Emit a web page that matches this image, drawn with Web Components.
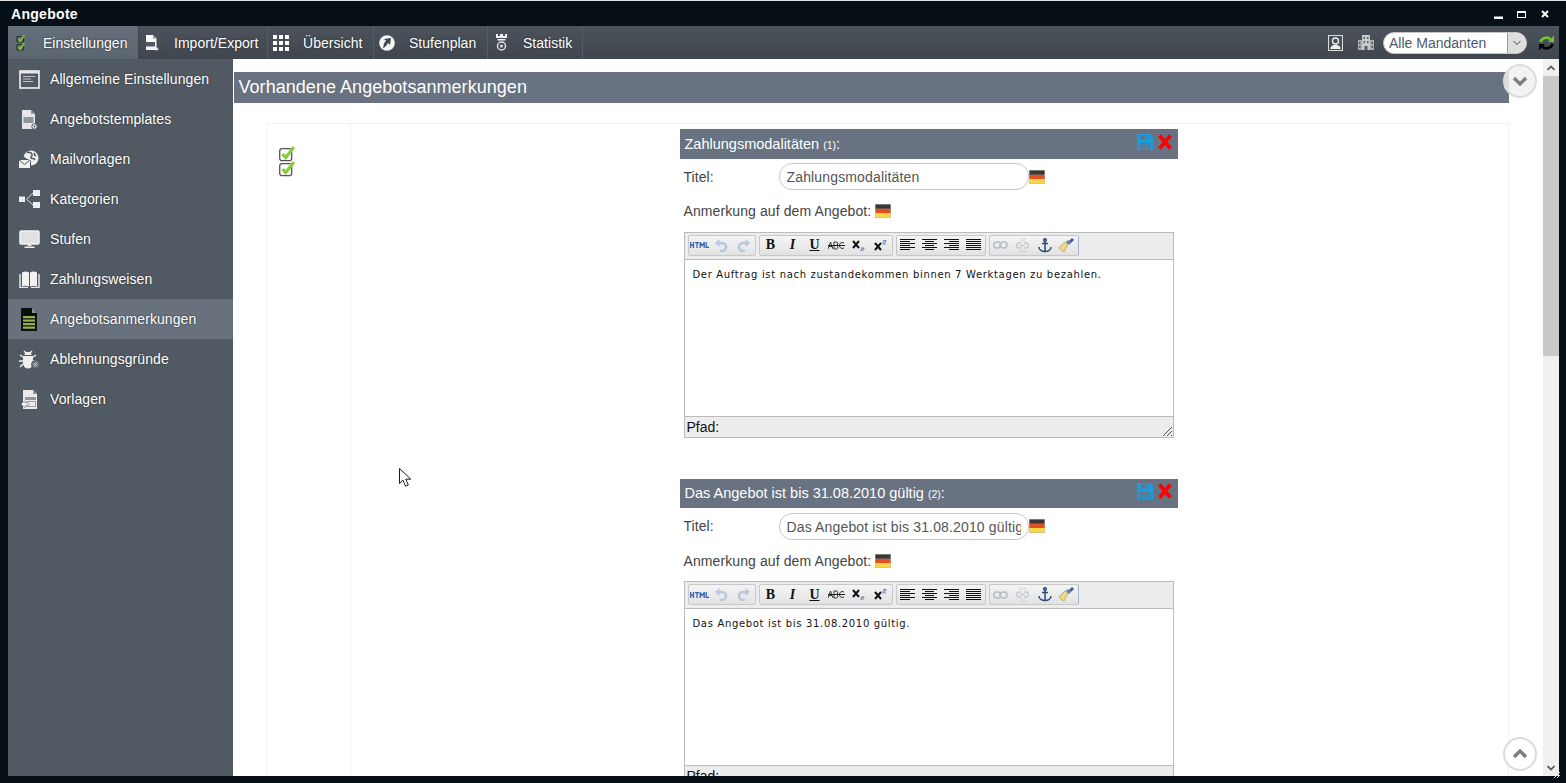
<!DOCTYPE html>
<html lang="de">
<head>
<meta charset="utf-8">
<title>Angebote</title>
<style>
	html, body { margin: 0; height: 100%; overflow: hidden; background: #060e16; }
	body { font: 14px "Liberation Sans", Arial, sans-serif; }
</style>
</head>
<body>
<app-window>
	<app-titlebar slot="title">Angebote</app-titlebar>
	<app-toolbar slot="toolbar">
		<app-tab icon="checks" w="131" active>Einstellungen</app-tab>
		<app-tab icon="pagegear" w="129">Import/Export</app-tab>
		<app-tab icon="grid" w="106">Übersicht</app-tab>
		<app-tab icon="compass" w="114">Stufenplan</app-tab>
		<app-tab icon="stats" w="95">Statistik</app-tab>
		<toolbar-right slot="right"></toolbar-right>
	</app-toolbar>
	<side-nav slot="nav">
		<side-item icon="window">Allgemeine Einstellungen</side-item>
		<side-item icon="template">Angebotstemplates</side-item>
		<side-item icon="mail">Mailvorlagen</side-item>
		<side-item icon="tree">Kategorien</side-item>
		<side-item icon="monitor">Stufen</side-item>
		<side-item icon="book">Zahlungsweisen</side-item>
		<side-item icon="note" active>Angebotsanmerkungen</side-item>
		<side-item icon="bug">Ablehnungsgründe</side-item>
		<side-item icon="vorlage">Vorlagen</side-item>
	</side-nav>
	<content-pane slot="main">
		<section-head>Vorhandene Angebotsanmerkungen</section-head>
		<notes-table>
			<note-editor heading="Zahlungsmodalitäten" num="1" value="Zahlungsmodalitäten">Der Auftrag ist nach zustandekommen binnen 7 Werktagen zu bezahlen.</note-editor>
			<note-editor heading="Das Angebot ist bis 31.08.2010 gültig" num="2" value="Das Angebot ist bis 31.08.2010 gültig">Das Angebot ist bis 31.08.2010 gültig.</note-editor>
		</notes-table>
	</content-pane>
</app-window>

<script>
const ICONS = {
	checks: `<svg width="10" height="17" viewBox="0 0 10 17"><rect x="1" y="2.500" width="6.500" height="5.500" rx="1" fill="none" stroke="#27322a" stroke-width="1.200"/><rect x="1" y="10.500" width="6.500" height="5.500" rx="1" fill="none" stroke="#27322a" stroke-width="1.200"/><path d="M2.200 5l2 2L8.500 1M2.200 13l2 2L8.500 9" fill="none" stroke="#7fbe34" stroke-width="2"/></svg>`,
	pagegear: `<svg width="13" height="16" viewBox="0 0 13 16"><path d="M0 0h7l3.500 3.500V15H0z" fill="#f6f6f6"/><path d="M7 0v3.500h3.500z" fill="#8d949b"/><rect x="0" y="7" width="9" height="4.500" fill="#4f5760"/><path d="M11 12.500v3M9.500 14h3" stroke="#f6f6f6" stroke-width="1.200"/></svg>`,
	grid: `<svg width="16" height="16" viewBox="0 0 16 16" fill="#fff"><rect width="4" height="4"/><rect x="6" width="4" height="4"/><rect x="12" width="4" height="4"/><rect y="6" width="4" height="4"/><rect x="6" y="6" width="4" height="4"/><rect x="12" y="6" width="4" height="4"/><rect y="12" width="4" height="4"/><rect x="6" y="12" width="4" height="4"/><rect x="12" y="12" width="4" height="4"/></svg>`,
	compass: `<svg width="16" height="16" viewBox="0 0 16 16"><circle cx="8" cy="8" r="7.800" fill="#f4f4f4"/><path d="M4 13.500l1-5 2-3-2-1.500 7-1-1 7-2-2-2 3z" fill="#3f464f"/></svg>`,
	stats: `<svg width="13" height="17" viewBox="0 0 13 17"><path d="M1 0h2v2h2V0h3v2h2V0h2v4H1z" fill="#eee"/><rect x="2.500" y="5" width="8" height="1.500" fill="#eee"/><circle cx="6.500" cy="12" r="4" fill="none" stroke="#ddd" stroke-width="1.500"/><circle cx="6.500" cy="12" r="1.500" fill="#ddd"/></svg>`,
	contact: `<svg width="15" height="16" viewBox="0 0 15 16"><rect x=".5" y=".5" width="14" height="15" fill="#4a515a" stroke="#ddd"/><circle cx="7.500" cy="6" r="3" fill="none" stroke="#eee" stroke-width="1.300"/><path d="M2.500 14c0-3 2-4 5-4s5 1 5 4z" fill="#eee"/></svg>`,
	office: `<svg width="16" height="15" viewBox="0 0 16 15"><path d="M4 0h8v15H4z" fill="#c9c9c9"/><path d="M0 5h4v10H0zM12 5h4v10h-4z" fill="#aaa"/><path d="M5.500 2h1.500v2H5.500zM9 2h1.500v2H9zM5.500 6h1.500v2H5.500zM9 6h1.500v2H9zM1 7h1.500v2H1zM13.500 7H15v2h-1.500zM1 11h1.500v2H1zM13.500 11H15v2h-1.500z" fill="#59616a"/><path d="M6.500 11h3v4h-3z" fill="#59616a"/></svg>`,
	refresh: `<svg width="15" height="16" viewBox="0 0 15 16"><path d="M1.500 7a6 5.500 0 0 1 10-2.800" fill="none" stroke="#6cc82c" stroke-width="2.600"/><path d="M9 7h6V.5z" fill="#6cc82c"/><path d="M13.500 9a6 5.500 0 0 1-10 2.800" fill="none" stroke="#000" stroke-width="2.600"/><path d="M6 9H0v6.500z" fill="#000"/></svg>`,
	window: `<svg width="21" height="19" viewBox="0 0 21 19"><rect x="1" y="1" width="19" height="17" fill="none" stroke="#e8e8e8" stroke-width="1.700"/><rect x="1" y="1" width="19" height="2.500" fill="#e8e8e8"/><path d="M4 6.500h12M4 9h8M4 11.500h10" stroke="#c0c4c8" stroke-width="1"/></svg>`,
	template: `<svg width="17" height="21" viewBox="0 0 17 21"><path d="M1 1h9l4 4v15H1z" fill="#e6e6e6"/><path d="M10 1v4h4z" fill="#8d949b"/><rect x="2.500" y="8" width="10" height="6" fill="#8e959c"/><circle cx="13.500" cy="17.500" r="2.700" fill="#eee" stroke="#515962"/><circle cx="13.500" cy="17.500" r="1" fill="#515962"/></svg>`,
	mail: `<svg width="22" height="19" viewBox="0 0 22 19"><circle cx="13" cy="8" r="7.500" fill="#eee"/><path d="M9 2c2 1 4 0 5 2s-2 3-1 4 3 0 4 2M17 3c-1 1-1 2 1 3" fill="none" stroke="#515962" stroke-width="1.500"/><path d="M0 9l6-2 7 4v8H0z" fill="#515962"/><path d="M1 10h11v8H1z" fill="#eee"/><path d="M1 10l5.500 4.500L12 10" fill="none" stroke="#515962" stroke-width="1"/></svg>`,
	tree: `<svg width="21" height="18" viewBox="0 0 21 18"><rect y="6.500" width="6" height="5.500" fill="#eee"/><rect x="14" width="7" height="6" fill="#eee"/><rect x="14" y="12" width="7" height="6" fill="#eee"/><path d="M14 3L7.500 9.200 14 15" fill="none" stroke="#ddd"/></svg>`,
	monitor: `<svg width="21" height="19" viewBox="0 0 21 19"><rect x="1" y="1" width="19" height="13" rx="1" fill="#dfe1e3" stroke="#f2f2f2" stroke-width="1.500"/><path d="M8.500 14.500h4V16h-4zM5.500 16.500h10V18h-10z" fill="#eee"/></svg>`,
	book: `<svg width="21" height="17" viewBox="0 0 21 17"><path d="M3 1.500c2-1.500 5-1.500 7 0v14c-2-1-5-1-7 0z" fill="#f2f2f2"/><path d="M11 1.500c2-1.500 5-1.500 7 0v14c-2-1-5-1-7 0z" fill="#f2f2f2"/><path d="M1 3v13.500h8M20 3v13.500h-8" fill="none" stroke="#e4e4e4" stroke-width="1.500"/></svg>`,
	note: `<svg width="16" height="23" viewBox="0 0 16 23"><path d="M0 0h11l5 5v18H0z" fill="#0a0f0a"/><path d="M11 0v5h5z" fill="#8a929c"/><path d="M2 8h12v2.200H2zM2 11.500h12v2.200H2zM2 15h12v2.200H2zM2 18.500h12v2.200H2z" fill="#8fb24f"/></svg>`,
	bug: `<svg width="21" height="20" viewBox="0 0 21 20"><path d="M5 2l2 2h4l2-2" fill="none" stroke="#eee" stroke-width="1.500"/><path d="M5.500 6a3.500 3 0 0 1 7 0z" fill="#eee"/><path d="M4 7h10v7a5 5.500 0 0 1-10 0z" fill="#eee"/><path d="M4 8L1 6M4 12H0M4 15l-3 3M14 8l3-2M14 12h2" stroke="#eee" stroke-width="1.500"/><circle cx="16.500" cy="15.500" r="4" fill="#777e86" stroke="#515962"/><path d="M15 14l3 3M18 14l-3 3" stroke="#ccc"/></svg>`,
	vorlage: `<svg width="17" height="21" viewBox="0 0 17 21"><path d="M2 1h10l4 4v15H2z" fill="#eaeaea"/><path d="M12 1v4h4z" fill="#8d949b"/><rect x="4" y="8" width="11" height="3" fill="#8e959c"/><rect x="6" y="12.500" width="8.500" height="5" fill="none" stroke="#9aa0a6"/><path d="M0 15l4-3v2h4v2.500H4V19z" fill="#f8f8f8" stroke="#777e86" stroke-width=".6"/></svg>`,
	bigchecks: `<svg width="17" height="16" viewBox="0 0 17 16"><rect x=".7" y="2.700" width="12" height="12" rx="2.500" fill="#fff" stroke="#555" stroke-width="1.300"/><path d="M3.500 8l3.200 3.500L15 1" fill="none" stroke="#8ccb3e" stroke-width="3.200"/></svg>`,
	save: `<svg width="16" height="16" viewBox="0 0 16 16"><path d="M0 0h13l3 3v13H0z" fill="#1e9bd8"/><rect x="4" y="1" width="7" height="4.500" fill="#687280"/><rect x="8" y="1.500" width="2" height="3.500" fill="#1e9bd8"/><rect x="3" y="9" width="10" height="6" fill="#687280"/><path d="M4.500 11h7M4.500 13h7" stroke="#1e9bd8"/></svg>`,
	del: `<svg width="14" height="16" viewBox="0 0 14 16"><path d="M1.500 1.500L12.500 14.500M12.500 1.500L1.500 14.500" stroke="#f00" stroke-width="3.600"/></svg>`,
	flag: `<svg width="16" height="14" viewBox="0 0 16 14"><rect width="16" height="14" fill="#bbb"/><rect x=".5" y=".5" width="15" height="4.300" fill="#383838"/><rect x=".5" y="4.800" width="15" height="4.200" fill="#e2501d"/><rect x=".5" y="9" width="15" height="4.500" fill="#fbd745"/></svg>`,
	html: `<svg width="19" height="6" viewBox="0 0 19 6"><g fill="none" stroke="#3363b4" stroke-width="1.300"><path d="M.7 0v6M3.500 0v6M.7 3h3M5 .6h4M7 .6V6M10.200 6V.5L12.200 3.500l2-3V6M16.200 0v5.400H19"/></g></svg>`,
	undo: `<svg width="13" height="13" viewBox="0 0 13 13"><path d="M3 4h4a4 4 0 0 1 0 8H5" fill="none" stroke="#b8c8de" stroke-width="2.600"/><path d="M4.500 0v8L0 4z" fill="#b8c8de"/></svg>`,
	redo: `<svg width="13" height="13" viewBox="0 0 13 13"><path d="M10 4H6a4 4 0 0 0 0 8h2" fill="none" stroke="#b8c8de" stroke-width="2.600"/><path d="M8.500 0v8L13 4z" fill="#b8c8de"/></svg>`,
	strike: `<svg width="17" height="9" viewBox="0 0 17 9"><path d="M0 8l2.500-7L5 8M1 5.500h3M6 1v7h2.500a1.800 1.800 0 0 0 0-3.500H6h2a1.600 1.600 0 0 0 0-3.500zM16 2a3 3 0 1 0 0 5" fill="none" stroke="#222" stroke-width=".9"/><path d="M0 4.500h17" stroke="#222" stroke-width="1"/></svg>`,
	sub: `<svg width="13" height="11" viewBox="0 0 13 11"><path d="M1 1l6 7M7 1L1 8" stroke="#111" stroke-width="2"/><path d="M9 8h3v1h-3v2h3" fill="none" stroke="#3363b4" stroke-width=".7"/></svg>`,
	sup: `<svg width="13" height="11" viewBox="0 0 13 11"><path d="M1 3l6 7M7 3l-6 7" stroke="#111" stroke-width="2"/><path d="M9 .5h3v1.500h-3v2h3" fill="none" stroke="#3363b4" stroke-width=".7"/></svg>`,
	alignl: `<svg width="15" height="12" viewBox="0 0 15 12"><path d="M0 .5h15M0 2.500h10M0 4.500h15M0 6.500h10M0 8.500h15M0 10.500h10" stroke="#111"/></svg>`,
	alignc: `<svg width="15" height="12" viewBox="0 0 15 12"><path d="M0 .5h15M3 2.500h9M0 4.500h15M3 6.500h9M0 8.500h15M3 10.500h9" stroke="#111"/></svg>`,
	alignr: `<svg width="15" height="12" viewBox="0 0 15 12"><path d="M0 .5h15M5 2.500h10M0 4.500h15M5 6.500h10M0 8.500h15M5 10.500h10" stroke="#111"/></svg>`,
	alignj: `<svg width="15" height="12" viewBox="0 0 15 12"><path d="M0 .5h15M0 2.500h15M0 4.500h15M0 6.500h15M0 8.500h15M0 10.500h15" stroke="#111"/></svg>`,
	link: `<svg width="15" height="8" viewBox="0 0 15 8"><g fill="none" stroke="#b6bcc6" stroke-width="1.500"><rect x=".8" y="1" width="7" height="6" rx="3"/><rect x="7" y="1" width="7" height="6" rx="3"/></g></svg>`,
	unlink: `<svg width="15" height="15" viewBox="0 0 15 15"><g fill="none" stroke="#c4c9d0" stroke-width="1.300"><path d="M6 5H4a2.500 2.500 0 0 0 0 5h2M9 5h2a2.500 2.500 0 0 1 0 5H9M5 7.500h5"/><path d="M5 0l1 3M10 0L9 3M7.500 0v3M5 15l1-3M10 15l-1-3M7.500 15v-3" stroke-width=".7"/></g></svg>`,
	anchor: `<svg width="14" height="15" viewBox="0 0 14 15"><g fill="none" stroke="#2d4a78" stroke-width="1.500"><circle cx="7" cy="2" r="1.300"/><path d="M7 3v11M4 5.500h6M1 9c0 3 3 4.500 6 4.500S13 12 13 9"/></g></svg>`,
	brush: `<svg width="17" height="15" viewBox="0 0 17 15"><path d="M10 6l-3-2-6 6c1 1 4 4 5 4z" fill="#eed98a" stroke="#a99350" stroke-width=".7"/><path d="M8 4l3 3 2-2-3-3z" fill="#6c7fa6"/><path d="M11 3l3-3 2 2-3 3z" fill="#3f5a92"/></svg>`,
	grip: `<svg width="11" height="11" viewBox="0 0 11 11"><path d="M1 10l9-9M5 10l5-5M9 10l1-1" stroke="#555"/></svg>`,
	chevup: `<svg width="16" height="10" viewBox="0 0 16 10"><path d="M2 8l6-6 6 6" fill="none" stroke="#808080" stroke-width="3.400"/></svg>`,
	chevdown: `<svg width="16" height="10" viewBox="0 0 16 10"><path d="M2 2l6 6 6-6" fill="none" stroke="#808080" stroke-width="3.400"/></svg>`,
	scrollup: `<svg width="8" height="6" viewBox="0 0 8 6"><path d="M.5 5L4 1.500 7.500 5" fill="none" stroke="#555" stroke-width="1.700"/></svg>`,
	scrolldown: `<svg width="8" height="6" viewBox="0 0 8 6"><path d="M.5 1L4 4.500 7.500 1" fill="none" stroke="#555" stroke-width="1.700"/></svg>`,
	cursor: `<svg width="14" height="20" viewBox="0 0 14 20"><path d="M.5.5v15l3.500-3.300 2.500 6 2.800-1.200-2.500-5.800h5z" fill="#fff" stroke="#1a1a1a"/></svg>`,
	winGrip: `<svg width="6" height="6" viewBox="0 0 6 6"><path d="M0 6l6-6M3 6l3-3" stroke="#ddd"/></svg>`,
	minimize: `<svg width="9" height="3" viewBox="0 0 9 3"><rect width="9" height="2.500" y=".5" fill="#fff"/></svg>`,
	maximize: `<svg width="9" height="7" viewBox="0 0 9 7"><rect x=".5" y="1" width="8" height="5.500" fill="none" stroke="#fff"/><rect width="9" height="2" fill="#fff"/></svg>`,
	close: `<svg width="8" height="8" viewBox="0 0 8 8"><path d="M1 1l6 6M7 1L1 7" stroke="#fff" stroke-width="2"/></svg>`
};

function icon (name)
{
	return ICONS[name] || "";
}

// small helper, every element here is only markup + style
class ShadowBase
extends HTMLElement
{
	render (html)
	{
		if (!this.shadowRoot) {
			this.attachShadow({mode:"open"});
		}
		this.shadowRoot.innerHTML = html;
	}
}

class AppWindow
extends ShadowBase
{
	connectedCallback ()
	{
		this.render(`
			<style>
				:host {
					display: grid;
					grid-template-columns: 225px 1fr;
					grid-template-rows: 25px 33px 1fr;
					height: 783px;
					padding: 0 7px 7px 8px;
					box-sizing: border-box;
					position: relative;
					border-top: 1px solid #dfe3e6;
				}
				::slotted([slot=title]), ::slotted([slot=toolbar]) { grid-column: 1 / 3; }
				.cursor { position: absolute; left: 399px; top: 467px; line-height: 0; }
				.grip { position: absolute; right: 6px; bottom: 5px; line-height: 0; }
			</style>
			<slot name="title"></slot>
			<slot name="toolbar"></slot>
			<slot name="nav"></slot>
			<slot name="main"></slot>
			<div class="cursor">${icon("cursor")}</div>
			<div class="grip">${icon("winGrip")}</div>
		`);
	}
}

class AppTitlebar
extends ShadowBase
{
	connectedCallback ()
	{
		this.render(`
			<style>
				:host {
					display: flex;
					align-items: center;
					justify-content: space-between;
					margin-left: 3px;
					font: bold 14px "Liberation Sans", Arial, sans-serif;
					letter-spacing: .3px;
					color: #fff;
				}
				.btns { display: flex; align-items: center; gap: 14px; padding-right: 10px; line-height: 0; }
				.btns svg:first-child { margin-top: 7px; }
				.btns svg:nth-child(2) { margin-right: 1px; margin-top: 2px; }
				.btns svg:last-child { margin-top: 1px; }
			</style>
			<slot></slot>
			<div class="btns">${icon("minimize")}${icon("maximize")}${icon("close")}</div>
		`);
	}
}

class AppToolbar
extends ShadowBase
{
	connectedCallback ()
	{
		this.render(`
			<style>
				:host {
					display: flex;
					background: linear-gradient(#4c535c, #3f464e);
				}
				.right { margin-left: auto; }
			</style>
			<slot></slot>
			<div class="right"><slot name="right"></slot></div>
		`);
	}
}

class AppTab
extends ShadowBase
{
	connectedCallback ()
	{
		this.render(`
			<style>
				:host {
					display: flex;
					align-items: center;
					height: 33px;
					width: ${this.getAttribute("w")}px;
					box-sizing: border-box;
					white-space: nowrap;
					border-right: 1px solid #555c65;
					color: #fff;
					font-size: 14px;
					letter-spacing: .03px;
					text-shadow: 0 0 2px #20252a;
				}
				:host([active]) { background: linear-gradient(#656f7a, #5c6671); border-right-color: #3f464e; }
				.ic { width: 26px; display: flex; justify-content: center; line-height: 0; margin-right: 9px; }
			</style>
			<span class="ic">${icon(this.getAttribute("icon"))}</span>
			<slot></slot>
		`);
	}
}

class ToolbarRight
extends ShadowBase
{
	connectedCallback ()
	{
		this.render(`
			<style>
				:host { display: flex; align-items: center; height: 33px; line-height: 0; }
				.gap1 { margin-right: 15px; display: flex; }
				.gap2 { margin-right: 9px; display: flex; }
				.sel {
					display: flex;
					width: 144px;
					height: 22px;
					box-sizing: border-box;
					border: 1px solid #c4c4c4;
					border-radius: 11px;
					background: #fff;
					overflow: hidden;
					margin-right: 12px;
					font: 14px/20px "Liberation Sans", Arial, sans-serif;
					color: #4d5b6c;
				}
				.val { flex: 1; padding-left: 5px; }
				.arrow {
					width: 18px;
					background: #dedede;
					border-left: 1px solid #999;
					display: flex;
					align-items: center;
					justify-content: center;
				}
				.arrow svg path { stroke: #444; stroke-width: 1; }
				.ref { margin-right: 5px; display: flex; }
			</style>
			<span class="gap1">${icon("contact")}</span>
			<span class="gap2">${icon("office")}</span>
			<div class="sel"><span class="val">Alle Mandanten</span><span class="arrow">${icon("scrolldown")}</span></div>
			<span class="ref">${icon("refresh")}</span>
		`);
	}
}

class SideNav
extends ShadowBase
{
	connectedCallback ()
	{
		this.render(`
			<style>
				:host { display: block; background: #515962; }
			</style>
			<slot></slot>
		`);
	}
}

class SideItem
extends ShadowBase
{
	connectedCallback ()
	{
		this.render(`
			<style>
				:host {
					display: flex;
					align-items: center;
					height: 40px;
					color: #fff;
					font-size: 14px;
					letter-spacing: .08px;
					text-shadow: 0 0 2px #2a2f35;
				}
				:host([active]) { background: #68717c; }
				.ic { width: 42px; display: flex; justify-content: center; line-height: 0; }
			</style>
			<span class="ic">${icon(this.getAttribute("icon"))}</span>
			<slot></slot>
		`);
	}
}

class ContentPane
extends ShadowBase
{
	connectedCallback ()
	{
		this.render(`
			<style>
				:host {
					display: grid;
					grid-template-columns: 1fr 16px;
					background: #fff;
					overflow: hidden;
					position: relative;
					height: 717px;
				}
				.scroller { padding: 13px 34px 0 1px; overflow: hidden; height: 704px; }
				.bar {
					background: #f0f0f0;
					display: flex;
					flex-direction: column;
					align-items: center;
					justify-content: space-between;
					line-height: 0;
				}
				.up, .down { height: 17px; display: flex; align-items: center; justify-content: center; }
				.thumb { position: absolute; right: 0; top: 17px; width: 16px; height: 280px; background: #c8c8c8; }
				.round {
					position: absolute;
					width: 30px;
					height: 30px;
					border: 2px solid #dcdcdc;
					border-radius: 50%;
					background: rgba(240, 240, 240, .85);
					display: flex;
					align-items: center;
					justify-content: center;
					line-height: 0;
				}
				.r1 { left: 1270px; top: 5px; }
				.r2 { left: 1270px; top: 678px; background: rgba(255, 255, 255, .85); }
			</style>
			<div class="scroller"><slot></slot></div>
			<div class="bar">
				<span class="up">${icon("scrollup")}</span>
				<span class="down">${icon("scrolldown")}</span>
			</div>
			<div class="thumb"></div>
			<div class="round r1">${icon("chevdown")}</div>
			<div class="round r2">${icon("chevup")}</div>
		`);
	}
}

class SectionHead
extends ShadowBase
{
	connectedCallback ()
	{
		this.render(`
			<style>
				:host {
					display: flex;
					align-items: center;
					height: 31px;
					padding-left: 4.500px;
					background: #687280;
					color: #fff;
					font-size: 18px;
					letter-spacing: .04px;
				}
			</style>
			<slot></slot>
		`);
	}
}

class NotesTable
extends ShadowBase
{
	connectedCallback ()
	{
		this.render(`
			<style>
				:host {
					display: grid;
					grid-template-columns: 84px 1fr;
					margin: 20px 0 0 32px;
					border: 1px solid #f2f2f2;
					border-bottom: 0;
				}
				.left {
					border-right: 1px solid #f2f2f2;
					padding: 22px 0 0 12px;
					line-height: 0;
				}
				.left div { height: 15px; }
				.right {
					display: flex;
					flex-direction: column;
					align-items: center;
					padding: 5px 2px 0 0;
				}
			</style>
			<div class="left"><div>${icon("bigchecks")}</div><div>${icon("bigchecks")}</div></div>
			<div class="right"><slot></slot></div>
		`);
	}
}

class NoteEditor
extends ShadowBase
{
	connectedCallback ()
	{
		const tool = (names) => names.map((n) => {
			if (n === "B" || n === "I" || n === "U") {
				return `<span class="btn ltr ${n}">${n}</span>`;
			}
			return `<span class="btn">${icon(n)}</span>`;
		}).join("");
		const flag = icon("flag");
		this.render(`
			<style>
				:host {
					display: block;
					width: 498px;
					height: 349.500px;
					font: 14px "Liberation Sans", Arial, sans-serif;
					color: #444;
				}
				.head {
					height: 29.500px;
					box-sizing: border-box;
					display: flex;
					align-items: center;
					padding: 0 6px 0 5px;
					background: #687280;
					color: #fff;
					font-size: 14.500px;
				}
				.head small { font-size: 10.500px; }
				.head .acts { margin-left: auto; display: flex; gap: 5px; line-height: 0; padding-bottom: 4px; }
				.row { display: flex; align-items: center; padding-left: 4px; }
				.title { margin-top: 4.500px; height: 27px; }
				.title label { width: 95px; letter-spacing: .05px; }
				.input {
					width: 250px;
					height: 27px;
					box-sizing: border-box;
					padding: 0 7px;
					border: 1px solid #c8c8c8;
					border-radius: 13px;
					line-height: 26px;
					color: #555;
					letter-spacing: .15px;
				}
				.input span { display: block; overflow: hidden; white-space: nowrap; }
				.anm { margin-top: 13px; height: 16px; gap: 4px; letter-spacing: .1px; }
				.editor {
					margin: 12.750px 4px 0;
					height: 206px;
					box-sizing: border-box;
					border: 1px solid #bbb;
					display: flex;
					flex-direction: column;
				}
				.tools {
					height: 27px;
					flex: none;
					box-sizing: border-box;
					background: #ededed;
					border-bottom: 1px solid #bbb;
					display: flex;
					gap: 3px;
					padding: 2px 3px 0;
				}
				.grp {
					display: flex;
					height: 21px;
					box-sizing: border-box;
					border: 1px solid #c8c8c8;
					border-radius: 2px;
					background: linear-gradient(#f4f4f4, #e2e2e2);
				}
				.grp:last-child { border-right-color: #9fb2d8; }
				.btn {
					width: 22px;
					height: 19px;
					display: flex;
					align-items: center;
					justify-content: center;
					line-height: 0;
				}
				.ltr { font: bold 14px "Liberation Serif", serif; color: #111; }
				.I { font-style: italic; }
				.U { text-decoration: underline; }
				.text {
					flex: 1;
					padding: 9px 8px;
					font: 10px/12px "DejaVu Sans", Verdana, sans-serif;
					letter-spacing: .67px;
					color: #111;
				}
				.status {
					height: 21px;
					flex: none;
					box-sizing: border-box;
					background: #ededed;
					border-top: 1px solid #bbb;
					padding-left: 2px;
					color: #111;
					line-height: 20px;
					position: relative;
				}
				.grip { position: absolute; right: 0; bottom: 0; line-height: 0; }
			</style>
			<div class="head">
				<span>${this.getAttribute("heading")} <small>(${this.getAttribute("num")})</small>:</span>
				<span class="acts">${icon("save")}${icon("del")}</span>
			</div>
			<div class="row title">
				<label>Titel:</label>
				<div class="input"><span>${this.getAttribute("value")}</span></div>
				${flag}
			</div>
			<div class="row anm">Anmerkung auf dem Angebot: ${flag}</div>
			<div class="editor">
				<div class="tools">
					<div class="grp">${tool(["html", "undo", "redo"])}</div>
					<div class="grp">${tool(["B", "I", "U", "strike", "sub", "sup"])}</div>
					<div class="grp">${tool(["alignl", "alignc", "alignr", "alignj"])}</div>
					<div class="grp">${tool(["link", "unlink", "anchor", "brush"])}</div>
				</div>
				<div class="text"><slot></slot></div>
				<div class="status">Pfad:<span class="grip">${icon("grip")}</span></div>
			</div>
		`);
	}
}

customElements.define("app-window", AppWindow);
customElements.define("app-titlebar", AppTitlebar);
customElements.define("app-toolbar", AppToolbar);
customElements.define("app-tab", AppTab);
customElements.define("toolbar-right", ToolbarRight);
customElements.define("side-nav", SideNav);
customElements.define("side-item", SideItem);
customElements.define("content-pane", ContentPane);
customElements.define("section-head", SectionHead);
customElements.define("notes-table", NotesTable);
customElements.define("note-editor", NoteEditor);
</script>
</body>
</html>
